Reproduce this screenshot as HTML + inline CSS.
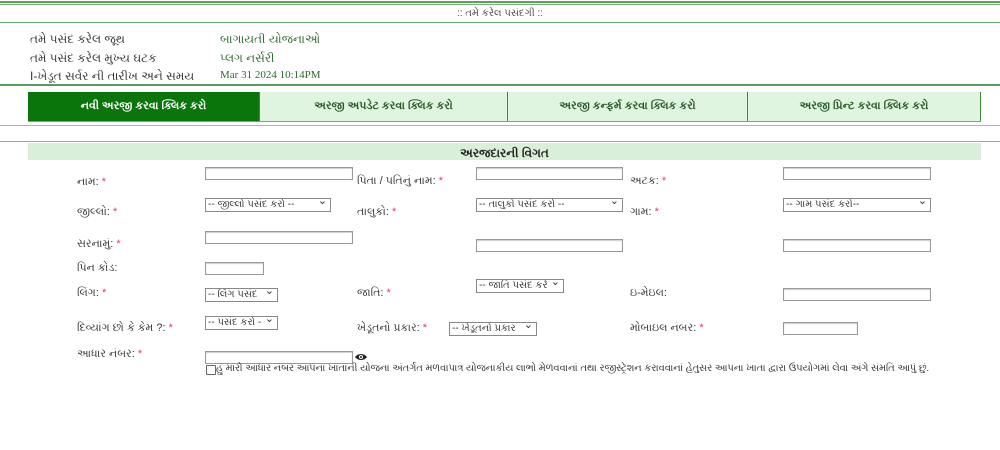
<!DOCTYPE html>
<html><head><meta charset="utf-8"><style>
body{margin:0;width:1000px;height:450px;background:#fff;font-family:"Liberation Sans","Noto Sans CJK SC",sans-serif;position:relative;overflow:hidden;color:#222}
.a{position:absolute;white-space:nowrap}
.l{font-size:11px;color:#333}
.r{color:#e0405a}
.in{position:absolute;border:1px solid #999;background:#fff;height:11px;box-shadow:inset 0 1px 1px #ccc}
.sel{position:absolute;border:1px solid #888;background:#fff;height:12px;font-size:10px;line-height:12px;color:#333;padding-left:2px;box-sizing:content-box;overflow:hidden}
.sel:after{content:"⌄";position:absolute;right:3px;top:-4px;font-size:11px;background:#fff}
.hl{position:absolute;left:0;width:1000px}
.tab{position:absolute;top:92px;height:29px;line-height:29px;text-align:center;font-size:11px;font-weight:bold;background:#dff5df;color:#2a5a2a;border-left:1px solid #3a8a3a;box-sizing:border-box}
</style></head><body>
<div class="hl" style="top:1px;height:2px;background:#5aa55a"></div>
<div class="hl" style="top:4px;height:1px;background:#7ab87a"></div>
<div class="a" style="left:0;width:1000px;text-align:center;top:8px;font-size:10px;color:#444">:: તમે કરેલ પસંદગી ::</div>
<div class="hl" style="top:22px;height:1px;background:#6aa86a"></div>
<div class="a l" style="left:30px;top:32px;font-size:12px">તમે પસંદ કરેલ જૂથ</div>
<div class="a l" style="left:30px;top:51px;font-size:12px">તમે પસંદ કરેલ મુખ્ય ઘટક</div>
<div class="a l" style="left:30px;top:69px;font-size:12px">I-ખેડૂત સર્વર ની તારીખ અને સમય</div>
<div class="a" style="left:220px;top:32px;font-size:12px;color:#2e6b2e">બાગાયતી યોજનાઓ</div>
<div class="a" style="left:220px;top:51px;font-size:12px;color:#2e6b2e">પ્લગ નર્સરી</div>
<div class="a" style="left:220px;top:69px;font-size:11px;color:#2e6b2e;font-family:'Liberation Serif',serif">Mar 31 2024 10:14PM</div>
<div class="hl" style="top:84px;height:2px;background:#5a9a5a"></div>
<div class="tab" style="left:28px;width:231px;background:#0a750a;color:#fff;border:none">નવી અરજી કરવા ક્લિક કરો</div>
<div class="tab" style="left:259px;width:248px">અરજી અપડેટ કરવા ક્લિક કરો</div>
<div class="tab" style="left:507px;width:240px">અરજી કન્ફર્મ કરવા ક્લિક કરો</div>
<div class="tab" style="left:747px;width:234px;border-right:1px solid #3a8a3a">અરજી પ્રિન્ટ કરવા ક્લિક કરો</div>
<div class="a" style="left:28px;top:121px;width:953px;height:1px;background:#7aaa7a"></div>
<div class="hl" style="top:125px;height:1px;background:#9ac29a"></div>
<div class="hl" style="top:141px;height:1px;background:#8ab88a"></div>
<div class="a" style="left:28px;top:143px;width:953px;height:17px;background:#d9efd9;text-align:center;font-size:12px;font-weight:bold;line-height:20px;color:#222">અરજદારની વિગત</div>

<div class="a l" style="left:77px;top:176px">નામ: <span class="r">*</span></div>
<div class="in" style="left:205px;top:167px;width:146px"></div>
<div class="a l" style="left:357px;top:175px">પિતા / પતિનું નામ: <span class="r">*</span></div>
<div class="in" style="left:476px;top:167px;width:145px"></div>
<div class="a l" style="left:630px;top:175px">અટક: <span class="r">*</span></div>
<div class="in" style="left:783px;top:167px;width:146px"></div>

<div class="a l" style="left:77px;top:206px">જીલ્લો: <span class="r">*</span></div>
<div class="sel" style="left:205px;top:198px;width:122px">-- જીલ્લો પસંદ કરો --</div>
<div class="a l" style="left:357px;top:206px">તાલુકો: <span class="r">*</span></div>
<div class="sel" style="left:476px;top:198px;width:143px">-- તાલુકો પસંદ કરો --</div>
<div class="a l" style="left:630px;top:206px">ગામ: <span class="r">*</span></div>
<div class="sel" style="left:783px;top:198px;width:144px">-- ગામ પસંદ કરો--</div>

<div class="a l" style="left:77px;top:238px">સરનામું: <span class="r">*</span></div>
<div class="in" style="left:205px;top:231px;width:146px"></div>
<div class="in" style="left:476px;top:239px;width:145px"></div>
<div class="in" style="left:783px;top:239px;width:146px"></div>

<div class="a l" style="left:77px;top:262px">પિન કોડ:</div>
<div class="in" style="left:205px;top:262px;width:57px"></div>

<div class="a l" style="left:77px;top:287px">લિંગ: <span class="r">*</span></div>
<div class="sel" style="left:205px;top:288px;width:69px">-- લિંગ પસંદ</div>
<div class="a l" style="left:357px;top:287px">જાતિ: <span class="r">*</span></div>
<div class="sel" style="left:476px;top:279px;width:84px">-- જાતિ પસંદ કરે</div>
<div class="a l" style="left:630px;top:287px">ઇ-મેઇલ:</div>
<div class="in" style="left:783px;top:288px;width:146px"></div>

<div class="a l" style="left:77px;top:322px">દિવ્યાંગ છો કે કેમ ?: <span class="r">*</span></div>
<div class="sel" style="left:205px;top:316px;width:69px">-- પસંદ કરો -</div>
<div class="a l" style="left:357px;top:322px">ખેડૂતનો પ્રકાર: <span class="r">*</span></div>
<div class="sel" style="left:449px;top:322px;width:84px">-- ખેડૂતનો પ્રકાર</div>
<div class="a l" style="left:630px;top:322px">મોબાઇલ નંબર: <span class="r">*</span></div>
<div class="in" style="left:783px;top:322px;width:73px"></div>

<div class="a l" style="left:77px;top:348px">આધાર નંબર: <span class="r">*</span></div>
<div class="in" style="left:205px;top:351px;width:146px"></div>
<svg class="a" style="left:355px;top:353px" width="12" height="8" viewBox="0 0 12 8"><path d="M0 4C3 0 9 0 12 4C9 8 3 8 0 4Z" fill="#222"/><circle cx="6" cy="4" r="2" fill="#fff"/><circle cx="6" cy="4" r="1" fill="#222"/></svg>
<div class="a" style="left:206px;top:365px;width:8px;height:8px;border:1px solid #666;border-radius:1px"></div>
<div class="a l" style="left:216px;top:363px;font-size:9.8px">હું મારો આધાર નંબર આપના ખાતાની યોજના અંતર્ગત મળવાપાત્ર યોજનાકીય લાભો મેળવવાનાં તથા રજીસ્ટ્રેશન કરાવવાનાં હેતુસર આપના ખાતા દ્વારા ઉપયોગમાં લેવા અંગે સંમતિ આપું છું.</div>
</body></html>
